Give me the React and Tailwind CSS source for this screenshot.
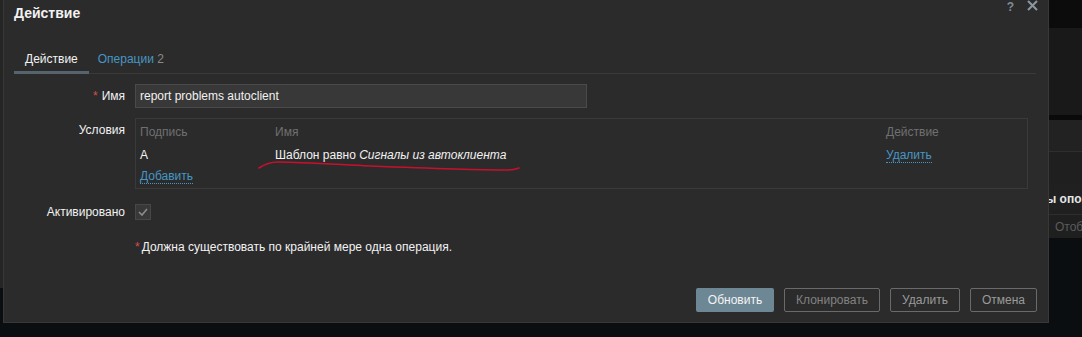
import React from "react";

function Link({ children }) {
  return (
    <span className="text-[#4796c4] border-b border-dotted border-[#4796c4] leading-[13px]">
      {children}
    </span>
  );
}

function Row({ label, required, children, labelClass = "" }) {
  return (
    <div className="flex">
      <div className={"w-[111px] text-right text-[#f2f2f2] " + labelClass}>
        {required && <span className="text-[#d64e4e] mr-[4px]">*</span>}
        {label}
      </div>
      <div className="ml-[10px]">{children}</div>
    </div>
  );
}

export default function App() {
  return (
    <div className="relative w-[1082px] h-[337px] flex overflow-hidden bg-[#0a0e11] text-[12px] leading-[14px] font-['Liberation_Sans',Arial,sans-serif]">
      <div className="w-[3px] flex flex-col">
        <div className="h-[288px] bg-[#252525]" />
      </div>

      {/* dialog */}
      <div className="w-[1046px] h-[323px] bg-[#2b2b2b] border-l border-r border-b border-[#383838] flex flex-col px-[10px] pb-[10px]">
        <div className="flex items-start justify-between">
          <h1 className="pt-[5px] text-[14px] leading-[16px] font-bold text-[#f2f2f2]">Действие</h1>
          <div className="flex items-start gap-[13px] pt-[1px] text-[#7f8c95]">
            <span className="text-[12px] leading-[12px] font-bold">?</span>
            <svg width="11" height="11" viewBox="0 0 11 11" className="-mt-[1px]">
              <path d="M1 1 L10 10 M10 1 L1 10" stroke="#8a98a2" strokeWidth="2" />
            </svg>
          </div>
        </div>

        {/* tabs */}
        <div className="mt-[24px] flex border-b border-[#3a3a3a] mr-[2px]">
          <div className="px-[11px] pt-[7px] pb-[5px] border-b-[3px] border-[#56656d] -mb-px text-[#f2f2f2]">
            Действие
          </div>
          <div className="pl-[9px] pr-[10px] pt-[7px] pb-[5px] text-[#4796c4]">
            Операции <span className="text-[#8a8a8a]">2</span>
          </div>
        </div>

        {/* form */}
        <div className="mt-[10px] flex flex-col">
          <Row label="Имя" required labelClass="pt-[5px]">
            <div className="w-[452px] h-[24px] bg-[#383838] border border-[#4a4a4a] px-[4px] flex items-center text-[#f2f2f2]">
              report problems autoclient
            </div>
          </Row>

          <div className="mt-[10px]">
            <Row label="Условия" labelClass="pt-[5px]">
              <div className="w-[893px] h-[71px] border border-[#3a3a3a] px-[4px] pt-[6px] flex flex-col">
                <div className="flex text-[#707070]">
                  <div className="w-[135px]">Подпись</div>
                  <div className="w-[611px]">Имя</div>
                  <div>Действие</div>
                </div>
                <div className="flex mt-[9px] text-[#f2f2f2]">
                  <div className="w-[135px]">A</div>
                  <div className="w-[611px]">
                    Шаблон равно <i>Сигналы из автоклиента</i>
                  </div>
                  <div>
                    <Link>Удалить</Link>
                  </div>
                </div>
                <div className="mt-[7px]">
                  <Link>Добавить</Link>
                </div>
              </div>
            </Row>
          </div>

          <div className="mt-[15px]">
            <Row label="Активировано" labelClass="pt-[1px]">
              <div className="w-[16px] h-[16px] bg-[#383838] border border-[#474747] flex items-center justify-center">
                <svg width="10" height="8" viewBox="0 0 10 8">
                  <path d="M1 4 L4 7 L9 1" fill="none" stroke="#8c8c8c" strokeWidth="1.6" />
                </svg>
              </div>
            </Row>
          </div>

          <div className="mt-[20px] ml-[121px] text-[#f2f2f2]">
            <span className="text-[#d64e4e] mr-[2px]">*</span>
            Должна существовать по крайней мере одна операция.
          </div>
        </div>

        {/* buttons */}
        <div className="mt-auto flex justify-end gap-[10px] mr-[1px]">
          <button className="w-[78px] h-[24px] bg-[#6d8794] rounded-[2px] text-[#f4f4f4]">Обновить</button>
          <button className="w-[96px] h-[24px] border border-[#6a6a6a] rounded-[2px] text-[#828282]">Клонировать</button>
          <button className="w-[70px] h-[24px] border border-[#6a6a6a] rounded-[2px] text-[#9a9a9a]">Удалить</button>
          <button className="w-[67px] h-[24px] border border-[#6a6a6a] rounded-[2px] text-[#9a9a9a]">Отмена</button>
        </div>
      </div>

      {/* page behind, right */}
      <div className="flex-1 flex flex-col overflow-hidden whitespace-nowrap">
        <div className="h-[28px] bg-[#0c0c0c]" />
        <div className="h-[87px] bg-[#191919]" />
        <div className="h-[5px] bg-[#0a0a0a]" />
        <div className="h-[32px] bg-[#222222] border-b border-[#2e2e2e]" />
        <div className="h-[32px] bg-[#1f1f1f]" />
        <div className="h-[31px] bg-[#202020] border-b border-[#2e2e2e] flex items-center -ml-[3px] text-[#e6e6e6] font-bold">
          ы оповещений
        </div>
        <div className="h-[23px] bg-[#1f1f1f] flex items-center pl-[6px] text-[#5c5c5c]">
          Отображать
        </div>
      </div>

      {/* red hand-drawn underline annotation */}
      <svg className="absolute left-0 top-0 pointer-events-none" width="1082" height="337">
        <path
          d="M259 168 C 265 164, 270 162, 278 162 C 300 162, 330 164, 370 166 C 420 168, 470 170, 507 170 C 512 170, 516 169, 519 168"
          fill="none"
          stroke="#c8102e"
          strokeWidth="1.6"
          strokeLinecap="round"
        />
      </svg>
    </div>
  );
}
